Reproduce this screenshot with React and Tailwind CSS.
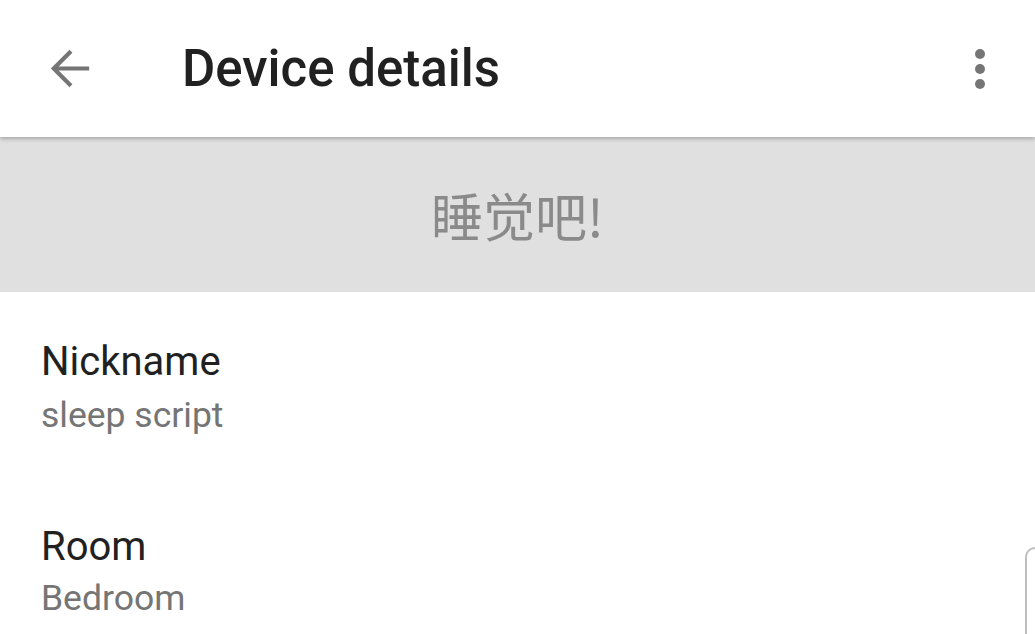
import React from "react";

export default function App() {
  return (
    <div className="relative w-[1035px] h-[634px] overflow-hidden bg-white" style={{ fontFamily: "Roboto, 'Noto Sans', sans-serif" }}>
      <header className="relative z-10 h-[137px] bg-white flex items-center shadow-[0_2px_4px_rgba(0,0,0,0.25)]">
        <div className="w-[182px] flex items-center pl-[40px]">
          <svg width="59" height="59" viewBox="0 0 24 24" className="text-[#757575]">
            <path fill="currentColor" d="M20 11.15H7.6l5.59-5.59L12 4.4l-7.6 7.6 7.6 7.6 1.19-1.16L7.6 12.85H20z" />
          </svg>
        </div>
        <h1 className="flex-1 text-[51px] font-medium text-[#212121] leading-none">Device details</h1>
        <div className="w-[110px] flex flex-col items-center gap-[5px]">
          <span className="w-[10px] h-[10px] rounded-full bg-[#757575]" />
          <span className="w-[10px] h-[10px] rounded-full bg-[#757575]" />
          <span className="w-[10px] h-[10px] rounded-full bg-[#757575]" />
        </div>
      </header>
      <div className="h-[155px] bg-[#e0e0e0] flex items-center justify-center pt-[0px]">
        <span className="text-[52px] text-[#8a8a8a] leading-none" style={{ fontFamily: "'Noto Sans CJK SC', 'Noto Sans', sans-serif" }}>睡觉吧!</span>
      </div>
      <div className="pl-[41px] pt-[46px]">
        <div className="text-[40px] leading-[48px] text-[#212121]">Nickname</div>
        <div className="mt-[7px] text-[35.5px] leading-[44px] text-[#757575]">sleep script</div>
        <div className="mt-[86px] text-[40px] leading-[48px] text-[#212121]">Room</div>
        <div className="mt-[5px] text-[35.5px] leading-[44px] text-[#757575]">Bedroom</div>
      </div>
      <div className="absolute left-[1025px] top-[547px] w-[20px] h-[100px] border-l-2 border-t-2 border-[#bdbdbd] rounded-tl-[10px]" />
    </div>
  );
}
